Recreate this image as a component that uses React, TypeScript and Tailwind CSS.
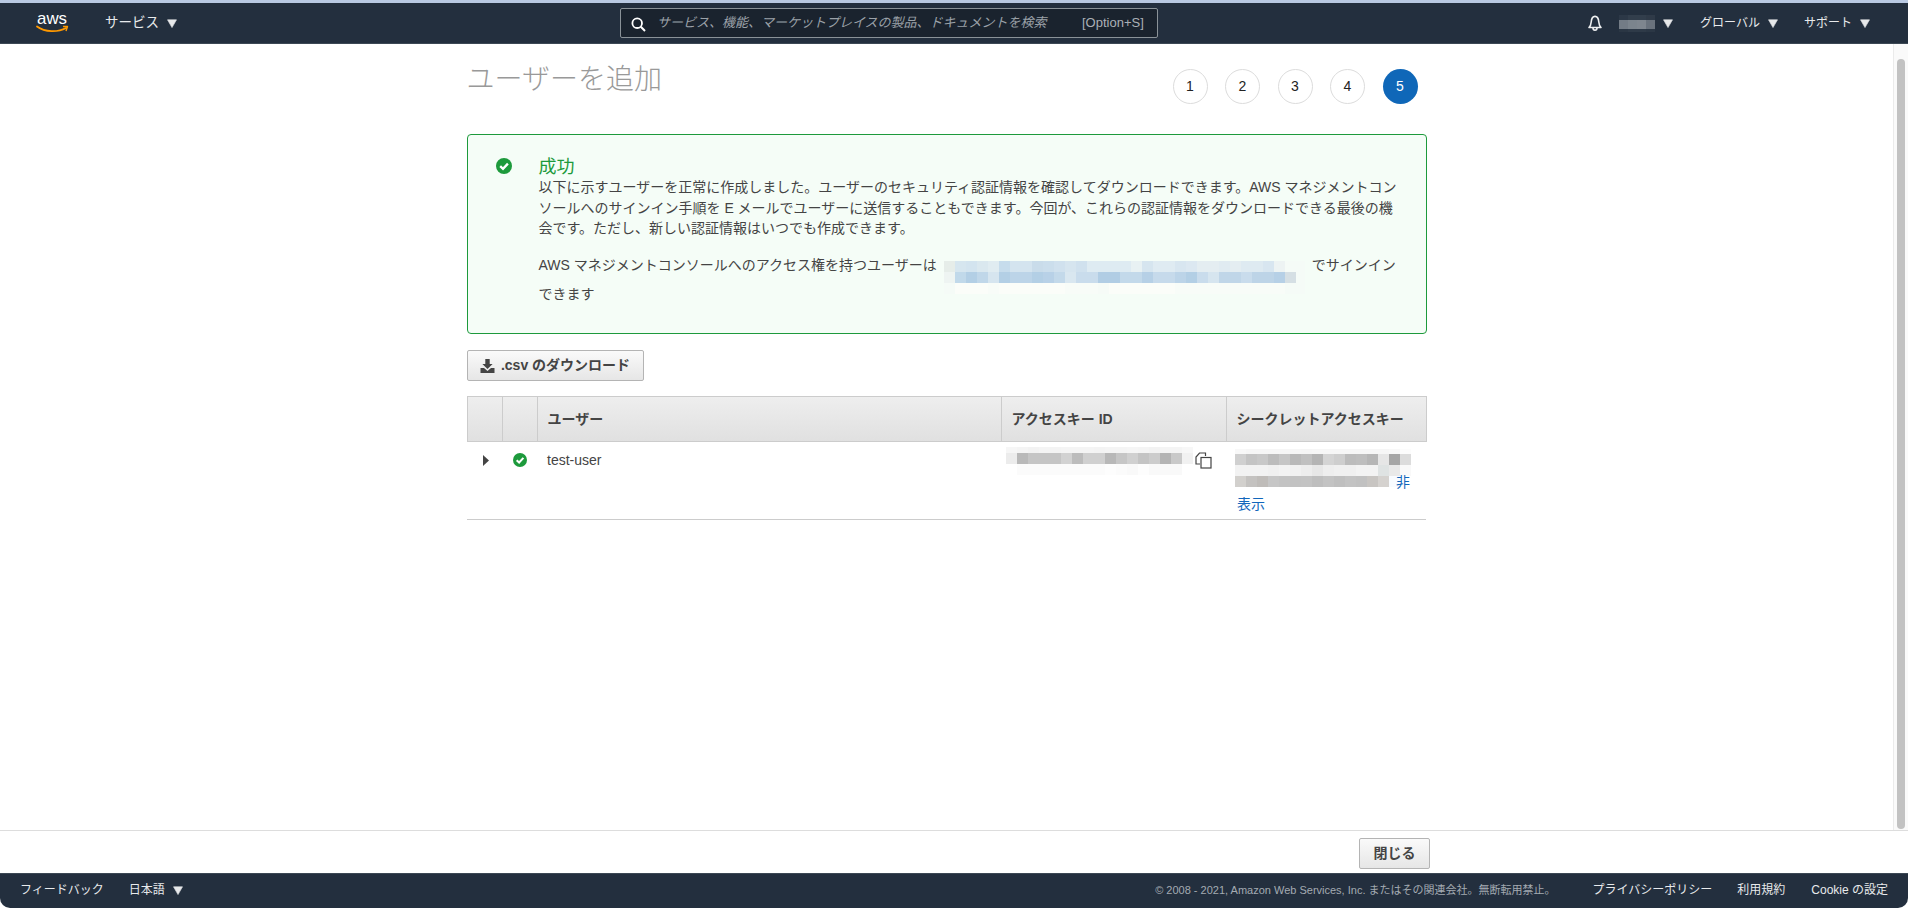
import React from "react";

const CJK = "font-['Liberation_Sans','Noto_Sans_CJK_JP',sans-serif]";

function Caret({ className = "" }: { className?: string }) {
  return (
    <svg width="10" height="9" viewBox="0 0 10 9" className={className}>
      <path d="M0.5 0.8 H9.5 L5 8.6 Z" fill="#e6e8ea" stroke="#e6e8ea" strokeWidth="0.6" strokeLinejoin="round" />
    </svg>
  );
}

function Check({ size }: { size: number }) {
  return (
    <svg width={size} height={size} viewBox="0 0 16 16" className="shrink-0">
      <circle cx="8" cy="8" r="8" fill="#1d9a3c" />
      <path d="M4.2 8.2 L7 10.9 L11.9 5.6" fill="none" stroke="#fff" strokeWidth="2.3" />
    </svg>
  );
}

type Row = { y: number; h: number; c: string[] };

function Pixels({ w, h, cell, rows, className = "" }: { w: number; h: number; cell: number; rows: Row[]; className?: string }) {
  return (
    <svg width={w} height={h} viewBox={`0 0 ${w} ${h}`} shapeRendering="crispEdges" className={className}>
      {rows.map((r, ri) =>
        r.c.map((col, i) => <rect key={`${ri}-${i}`} x={i * cell} y={r.y} width={cell} height={r.h} fill={col} />)
      )}
    </svg>
  );
}

const e = (s: string) => s.split(" ").map((x) => "#" + x);

const emailRows: Row[] = [
  { y: 0, h: 11, c: e("e6ede9 d6e6ef d3e4ef dae8ef e0ecf1 c6dcec d4e4ef d4e4ef c9dcea cbdeec d0e1ee d6e5ef d0e1ee deebf2 deebf2 deebf2 deebf2 e8f1f3 d6e5ef dfebf2 dfebf2 d8e6f0 dce8f1 e4edf1 e4edf1 e0ebf1 e4edf1 deeaf1 deeaf1 d8e6f0 edf3f3 f5fbf7 f5fbf7") },
  { y: 11, h: 11, c: e("eef4f2 c1d9ea b3cfe5 c0d7e9 d6e5ef b3cfe5 bcd4e8 bcd4e8 b3cfe5 b8d1e7 c3d9ea d9e7f0 c9dcec c9dcec b1cde4 b1cde4 c3d9ea c3d9ea b6d0e6 c6daeb c6daeb bcd4e8 b3cfe5 c9dcec d6e5ef c0d6e8 c0d6e8 c9dcec bdd4e7 bdd4e7 b6d0e6 d5dfe4 f5fbf7") },
  { y: 22, h: 11, c: e("f5fbf7 fbfdf9 fbfdf9 fbfdf9 f8fcf8 fbfdf9 fbfdf9 fbfdf9 fbfdf9 fbfdf9 fbfdf9 f8fcf8 f8fcf8 f8fcf8 f6fbf7 fbfdf9 fbfdf9 fbfdf9 fbfdf9 fbfdf9 fbfdf9 f8fcf8 f8fcf8 f8fcf8 f8fcf8 f8fcf8 f8fcf8 f8fcf8 f8fcf8 f8fcf8 f8fcf8 f5fbf7 f5fbf7") },
];

const keyRows: Row[] = [
  { y: 0, h: 6, c: e("f6f6f6 f4f4f4 f2f2f2 f4f4f4 f3f3f3 f4f4f4 f4f4f4 f4f4f4 f3f3f3 f4f4f4 f4f4f4 f5f5f5 f4f4f4 f2f2f2 f4f4f4 f4f4f4 f7f7f7") },
  { y: 6, h: 11, c: e("ececec b9b9b9 c5c5c5 c5c5c5 c5c5c5 d2d2d2 bcbcbc d0d0d0 d0d0d0 b8b8b8 c6c6c6 d0d0d0 c4c4c4 cccccc b4b4b4 c9c9c9 f1f1f1") },
  { y: 17, h: 11, c: e("ffffff fbfbfb fbfbfb fbfbfb fbfbfb fbfbfb fbfbfb fbfbfb fbfbfb fdfdfd fbfbfb f9f9f9 fdfdfd f9f9f9 f9f9f9 f9f9f9 ffffff") },
];

const secretRows: Row[] = [
  { y: 0, h: 5, c: e("f8f8f8 f6f6f6 f6f6f6 f6f6f6 f6f6f6 f6f6f6 f5f5f5 f6f6f6 f6f6f6 f6f6f6 f6f6f6 f6f6f6 f6f6f6 f6f6f6 f8f8f8 fcfcfc") },
  { y: 5, h: 11, c: e("d0d0d0 c4c4c4 c8c8c8 bcbcbc c6c6c6 b9b9b9 c0c0c0 b4b4b4 d4d4d4 cecece bcbcbc bebebe b6b6b6 e6e6e6 a6a6a6 dcdcdc") },
  { y: 16, h: 11, c: e("f2f2f2 f2f2f2 f2f2f2 f0f0f0 f3f3f3 f1f1f1 ededed e7e7e7 eeeeee f0f0f0 f0f0f0 f3f3f3 f3f3f3 dfe3e3 e9e9e9 f9f9f9") },
  { y: 27, h: 11, c: e("d2d0cd c4c2c0 bfbcb9 c6c6c6 c3c3c3 c2c2c2 c3c3c3 bebebe c3c3c3 bfbfbf c3c3c3 c1c1c1 c8c5c2 d5d2cf f8fbff ffffff") },
];

const userRows: Row[] = [
  { y: 0, h: 5, c: e("2c3847 323e4c 323e4c 2f3a48") },
  { y: 5, h: 9, c: e("737c86 7b848d 7e868f 69727d") },
  { y: 14, h: 3, c: e("2a3644 2e3a48 2e3a48 2b3745") },
];

function NavItem({ children }: { children: React.ReactNode }) {
  return <span className="flex items-center gap-[8px] text-[12px] text-[#e8eaec]">{children}</span>;
}

function Step({ n, active }: { n: number; active?: boolean }) {
  return (
    <div
      className={
        active
          ? "flex h-[35px] w-[35px] items-center justify-center rounded-full bg-[#0f67b8] text-[14px] text-white"
          : "flex h-[35px] w-[35px] items-center justify-center rounded-full border border-[#dcdcdc] bg-white text-[14px] text-[#222]"
      }
    >
      {n}
    </div>
  );
}

export default function App() {
  return (
    <div className={`${CJK} flex h-[908px] w-[1908px] flex-col overflow-hidden bg-white text-[14px] text-[#444]`}>
      {/* top console navigation */}
      <header className="flex h-[44px] items-center border-t-[3px] border-b border-t-[#b9c9e2] border-b-[#3c4854] bg-[#232f3e] pl-[36px] pr-[38px]">
        <div className="flex w-[584px] items-center">
          <svg width="33" height="23" viewBox="0 0 33 23" className="mb-[2px]">
            <text x="1" y="12.5" fontSize="17" fontFamily="'Liberation Sans', sans-serif" fill="#ffffff" textLength="30" lengthAdjust="spacingAndGlyphs">aws</text>
            <path d="M1 15.5 C9 21.5 22 21.5 30 17" fill="none" stroke="#f90" strokeWidth="1.8" strokeLinecap="round" />
            <path d="M27 15.5 L31.5 15.5 L30 20" fill="none" stroke="#f90" strokeWidth="1.4" strokeLinejoin="round" />
          </svg>
          <span className="ml-[36px] mr-[8px] text-[13.5px] text-[#e8eaec]">サービス</span>
          <Caret />
        </div>
        <div className="flex h-[30px] w-[538px] items-center rounded-[2px] border border-[#8a9298] bg-[#1a232e] pl-[10px] pr-[8px] text-[13px]">
          <svg width="15" height="15" viewBox="0 0 15 15" className="mt-[2px] shrink-0">
            <circle cx="6.2" cy="6.2" r="4.8" fill="none" stroke="#fff" strokeWidth="1.8" />
            <path d="M9.8 9.8 L14 14" stroke="#fff" strokeWidth="2" />
          </svg>
          <span className="ml-[11px] block w-[414px] shrink-0 overflow-hidden whitespace-nowrap italic text-[#9aa1a8]">
            サービス、機能、マーケットプレイスの製品、ドキュメントを検索
          </span>
          <span className="ml-[11px] whitespace-nowrap text-[#aab0b6]">[Option+S]</span>
        </div>
        <div className="ml-auto flex items-center">
          <svg width="18" height="18" viewBox="0 0 18 18" fill="none" stroke="#eef0f1" strokeWidth="1.6">
            <path d="M3 13.5 H15 C13.4 12 13 10.6 12.8 8 C12.5 4.6 11 2.4 9 2.4 C7 2.4 5.5 4.6 5.2 8 C5 10.6 4.6 12 3 13.5 Z" strokeLinejoin="round" />
            <path d="M7 14 C7 17 11 17 11 14" />
          </svg>
          <Pixels w={36} h={17} cell={9} rows={userRows} className="ml-[15px]" />
          <Caret className="ml-[8px]" />
          <div className="ml-[27px]">
            <NavItem>
              グローバル <Caret />
            </NavItem>
          </div>
          <div className="ml-[26px]">
            <NavItem>
              サポート <Caret />
            </NavItem>
          </div>
        </div>
      </header>

      {/* scrolling content area */}
      <div className="flex min-h-0 flex-1">
        <main className="flex-1">
          <div className="mx-auto w-[960px]">
            <div className="flex h-[90px] justify-between">
              <h1 className="mt-[16px] text-[28px] leading-[40px] font-light text-[#999]">ユーザーを追加</h1>
              <div className="mr-[9px] mt-[25px] flex gap-[17.5px]">
                <Step n={1} />
                <Step n={2} />
                <Step n={3} />
                <Step n={4} />
                <Step n={5} active />
              </div>
            </div>

            <section className="flex h-[200px] rounded-[4px] border border-[#1d9a3c] bg-[#f5fdf7] pl-[28px] pr-[26px] pt-[22px]">
              <div className="mt-[1px] w-[43px] shrink-0">
                <Check size={16} />
              </div>
              <div>
                <h2 className="text-[18px] leading-[20px] text-[#1d9a3c]">成功</h2>
                <p className="text-[14px] leading-[20.5px]">
                  以下に示すユーザーを正常に作成しました。ユーザーのセキュリティ認証情報を確認してダウンロードできます。AWS マネジメントコンソールへのサインイン手順を E メールでユーザーに送信することもできます。今回が、これらの認証情報をダウンロードできる最後の機会です。ただし、新しい認証情報はいつでも作成できます。
                </p>
                <p className="mt-[16px] text-[14px] leading-[20.5px]">
                  AWS マネジメントコンソールへのアクセス権を持つユーザーは
                  <Pixels w={361} h={33} cell={11} rows={emailRows} className="mx-[7px] my-[-10px] inline-block align-[-14px]" />
                  でサインインできます
                </p>
              </div>
            </section>

            <button className="mt-[16px] flex h-[31px] w-[177px] items-center justify-center gap-[6px] rounded-[2px] border border-[#b4b4b4] bg-gradient-to-b from-[#fafafa] to-[#e6e6e6] text-[14px] font-bold text-[#444]">
              <svg width="15" height="14" viewBox="0 0 15 14">
                <path d="M5.3 0 H9.7 V5 H12.6 L7.5 10 L2.4 5 H5.3 Z" fill="#444" />
                <path d="M0.5 9 H4 L7.5 12 L11 9 H14.5 V14 H0.5 Z" fill="#444" />
              </svg>
              .csv のダウンロード
            </button>

            <table className="mt-[15px] w-[960px] table-fixed border-collapse">
              <thead>
                <tr className="h-[45px] bg-gradient-to-b from-[#eeeeee] to-[#e0e0e0] text-left text-[14px] font-bold">
                  <th className="w-[35px] border border-[#cccccc]"></th>
                  <th className="w-[35px] border border-[#cccccc]"></th>
                  <th className="w-[464px] border border-[#cccccc] pl-[10px]">ユーザー</th>
                  <th className="w-[225px] border border-[#cccccc] pl-[10px]">アクセスキー ID</th>
                  <th className="border border-[#cccccc] pl-[10px]">シークレットアクセスキー</th>
                </tr>
              </thead>
              <tbody>
                <tr className="h-[78px] border-b border-[#cccccc] align-top">
                  <td className="pt-[12px]">
                    <svg width="6" height="11" viewBox="0 0 6 11" className="ml-[16px] mt-[1px]">
                      <path d="M0 0 L6 5.5 L0 11 Z" fill="#444" />
                    </svg>
                  </td>
                  <td className="pt-[11px]">
                    <div className="ml-[11px]">
                      <Check size={14} />
                    </div>
                  </td>
                  <td className="pl-[10px] pt-[8px] leading-[20px]">test-user</td>
                  <td className="pl-[5px] pt-[5px]">
                    <div className="flex items-start">
                      <Pixels w={187} h={28} cell={11} rows={keyRows} />
                      <svg width="17" height="17" viewBox="0 0 17 17" fill="none" stroke="#444" strokeWidth="1.2" className="ml-[2px] mt-[5px]">
                        <path d="M5 12 H1 V5 L4.5 1 H10.5 V4" />
                        <rect x="6" y="5.5" width="10" height="10.5" fill="#fff" />
                      </svg>
                    </div>
                  </td>
                  <td className="pl-[9px] pt-[7px]">
                    <div className="relative h-[70px]">
                      <Pixels w={178} h={38} cell={11} rows={secretRows} />
                      <a className="absolute left-[161px] top-[23px] leading-[20px] text-[#1166bb]">非</a>
                      <a className="absolute left-[2px] top-[45px] leading-[20px] text-[#1166bb]">表示</a>
                    </div>
                  </td>
                </tr>
              </tbody>
            </table>
          </div>
        </main>
        <aside className="flex w-[15px] shrink-0 justify-center border-l border-[#ebebeb] bg-[#fafafa] pt-[15px]">
          <div className="h-[770px] w-[8px] rounded-[4px] bg-[#c2c2c2]"></div>
        </aside>
      </div>

      {/* action bar */}
      <div className="flex h-[43px] items-start justify-end border-t border-[#dddddd] pr-[478px] pt-[7px]">
        <button className="h-[31px] w-[71px] rounded-[2px] border border-[#b4b4b4] bg-gradient-to-b from-[#fafafa] to-[#e6e6e6] text-[14px] font-bold text-[#444]">
          閉じる
        </button>
      </div>

      {/* console footer */}
      <footer className="flex h-[35px] items-center rounded-b-[10px] border-t border-[#3c4854] bg-[#232f3e] pb-[2px] pl-[20px] pr-[20px] text-[12px] text-[#e8eaec]">
        <span>フィードバック</span>
        <span className="ml-[25px] mr-[8px]">日本語</span>
        <Caret />
        <span className="ml-auto text-[11px] text-[#a4abb2]">© 2008 - 2021, Amazon Web Services, Inc. またはその関連会社。無断転用禁止。</span>
        <span className="ml-[37px]">プライバシーポリシー</span>
        <span className="ml-[25px]">利用規約</span>
        <span className="ml-[26px]">Cookie の設定</span>
      </footer>
    </div>
  );
}
